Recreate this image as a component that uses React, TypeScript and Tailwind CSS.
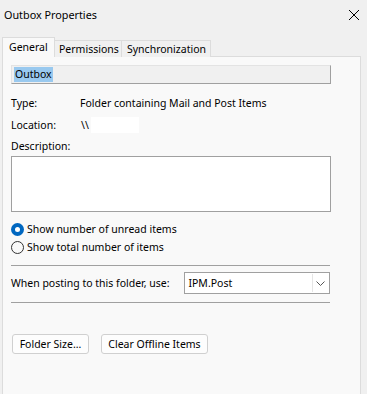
import React from 'react';

const font = { fontFamily: '"Segoe UI", "Noto Sans", "Open Sans", sans-serif' };

export default function App() {
  return (
    <div className="w-[367px] h-[394px] overflow-hidden bg-[#f0f0f0] text-[#000] text-[10.5px] leading-none" style={font}>
      {/* Title bar */}
      <div className="h-[30px] flex items-center justify-between pl-[4px] pr-[6px]">
        <span className="text-[10.8px]">Outbox Properties</span>
        <svg width="12" height="12" viewBox="0 0 12 12" className="mr-[1px]">
          <path d="M1 1 L11 11 M11 1 L1 11" stroke="#000" strokeWidth="1" />
        </svg>
      </div>

      {/* Tabs */}
      <div className="mt-[7px] ml-[2px] flex items-end h-[20px] relative z-10">
        <div className="h-[20px] w-[53px] bg-[#f9f9f9] border border-b-0 border-[#dcdcdc] pl-[6px] pt-[4px] whitespace-nowrap">General</div>
        <div className="h-[17px] w-[67px] bg-[#f0f0f0] border border-l-0 border-b-0 border-[#dcdcdc] pl-[4px] pt-[3px] whitespace-nowrap">Permissions</div>
        <div className="h-[17px] w-[89px] bg-[#f0f0f0] border border-l-0 border-b-0 border-[#dcdcdc] pl-[5px] pt-[3px] whitespace-nowrap">Synchronization</div>
      </div>

      {/* Panel */}
      <div className="ml-[2px] mr-[6px] -mt-px h-[360px] bg-[#f9f9f9] border border-[#dcdcdc] pl-[8px] pr-[30px] flex flex-col">
        <div className="mt-[8px] h-[19px] w-[320px] bg-[#f0f0f0] border border-[#e3e3e3] border-r-[#a0a0a0] border-b-[#a0a0a0] flex items-center pl-[2px]">
          <span className="bg-[#99c9ef] px-[1px] py-[2px]">Outbox</span>
        </div>

        <div className="mt-[12px] flex items-center h-[14px] whitespace-nowrap">
          <span className="w-[69px]">Type:</span>
          <span>Folder containing Mail and Post Items</span>
        </div>
        <div className="mt-[7px] flex items-center h-[16px]">
          <span className="w-[70px]">Location:</span>
          <span>\\</span>
          <span className="ml-[2px] w-[48px] h-[16px] bg-white"></span>
        </div>
        <div className="mt-[6px] h-[14px] flex items-center">Description:</div>
        <div className="mt-[3px] h-[56px] w-[320px] bg-white border border-[#a0a0a0]"></div>

        <div className="mt-[10px] flex flex-col gap-[4px]">
          <label className="flex items-center h-[14px] whitespace-nowrap">
            <span className="w-[13px] h-[13px] rounded-full bg-[#0067c0] flex items-center justify-center">
              <span className="w-[5px] h-[5px] rounded-full bg-white"></span>
            </span>
            <span className="ml-[3px]">Show number of unread items</span>
          </label>
          <label className="flex items-center h-[14px] whitespace-nowrap">
            <span className="w-[13px] h-[13px] rounded-full border border-[#333]"></span>
            <span className="ml-[3px]">Show total number of items</span>
          </label>
        </div>

        <div className="mt-[11px] w-[319px] h-px bg-[#a0a0a0]"></div>

        <div className="mt-[6px] flex items-center h-[22px]">
          <span className="w-[174px] whitespace-nowrap">When posting to this folder, use:</span>
          <div className="w-[146px] h-[22px] bg-white border border-[#a0a0a0] flex items-center justify-between pl-[3px]">
            <span>IPM.Post</span>
            <span className="w-[16px] h-[18px] border-l border-[#e5e5e5] flex items-center justify-center mr-[1px]">
              <svg width="9" height="5" viewBox="0 0 9 5">
                <path d="M0.5 0.5 L4.5 4.5 L8.5 0.5" fill="none" stroke="#555" strokeWidth="1" />
              </svg>
            </span>
          </div>
        </div>

        <div className="mt-[8px] w-[319px] h-px bg-[#a0a0a0]"></div>

        <div className="mt-[31px] flex gap-[12px] pl-[1px]">
          <button className="h-[20px] w-[77px] bg-[#fdfdfd] border border-[#d0d0d0] rounded-[3px] text-[10.5px]" style={font}>Folder Size...</button>
          <button className="h-[20px] w-[107px] bg-[#fdfdfd] border border-[#d0d0d0] rounded-[3px] text-[10.5px]" style={font}>Clear Offline Items</button>
        </div>
      </div>
    </div>
  );
}
